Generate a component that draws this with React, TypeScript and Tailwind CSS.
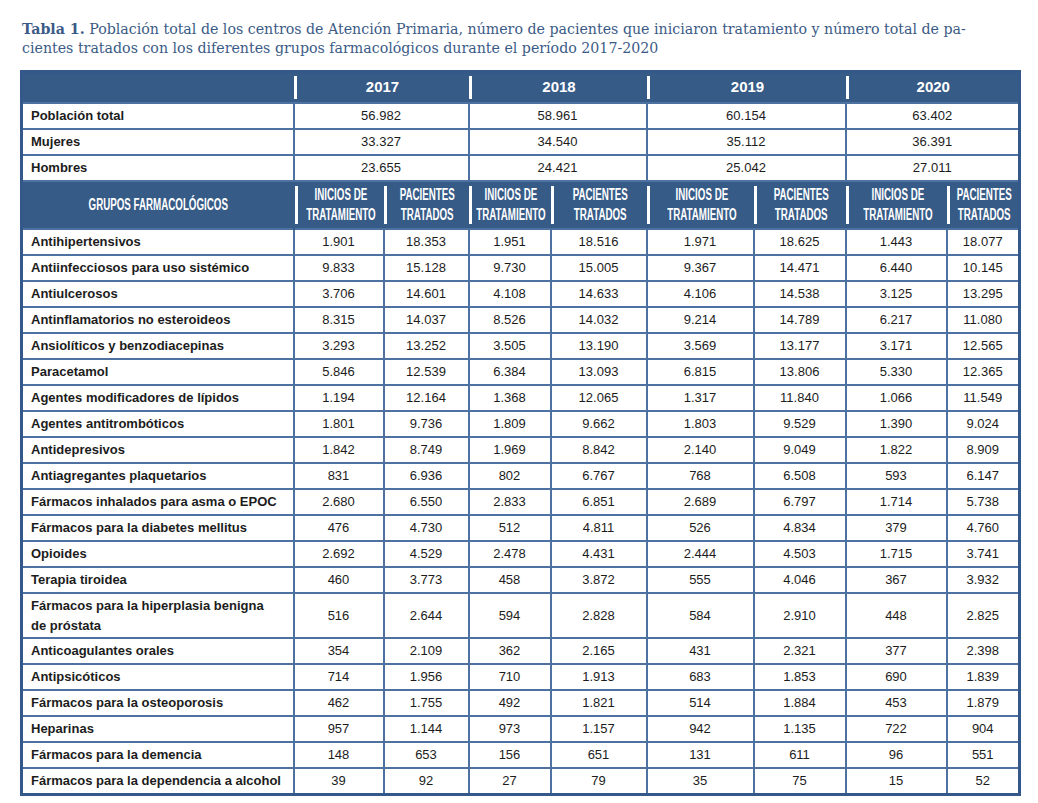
import React from 'react';

const years = ['2017', '2018', '2019', '2020'];

const population = [
  { label: 'Población total', values: ['56.982', '58.961', '60.154', '63.402'] },
  { label: 'Mujeres', values: ['33.327', '34.540', '35.112', '36.391'] },
  { label: 'Hombres', values: ['23.655', '24.421', '25.042', '27.011'] },
];

const groups: { label: React.ReactNode; values: string[]; tall?: boolean }[] = [
  { label: 'Antihipertensivos', values: ['1.901', '18.353', '1.951', '18.516', '1.971', '18.625', '1.443', '18.077'] },
  { label: 'Antiinfecciosos para uso sistémico', values: ['9.833', '15.128', '9.730', '15.005', '9.367', '14.471', '6.440', '10.145'] },
  { label: 'Antiulcerosos', values: ['3.706', '14.601', '4.108', '14.633', '4.106', '14.538', '3.125', '13.295'] },
  { label: 'Antinflamatorios no esteroideos', values: ['8.315', '14.037', '8.526', '14.032', '9.214', '14.789', '6.217', '11.080'] },
  { label: 'Ansiolíticos y benzodiacepinas', values: ['3.293', '13.252', '3.505', '13.190', '3.569', '13.177', '3.171', '12.565'] },
  { label: 'Paracetamol', values: ['5.846', '12.539', '6.384', '13.093', '6.815', '13.806', '5.330', '12.365'] },
  { label: 'Agentes modificadores de lípidos', values: ['1.194', '12.164', '1.368', '12.065', '1.317', '11.840', '1.066', '11.549'] },
  { label: 'Agentes antitrombóticos', values: ['1.801', '9.736', '1.809', '9.662', '1.803', '9.529', '1.390', '9.024'] },
  { label: 'Antidepresivos', values: ['1.842', '8.749', '1.969', '8.842', '2.140', '9.049', '1.822', '8.909'] },
  { label: 'Antiagregantes plaquetarios', values: ['831', '6.936', '802', '6.767', '768', '6.508', '593', '6.147'] },
  { label: 'Fármacos inhalados para asma o EPOC', values: ['2.680', '6.550', '2.833', '6.851', '2.689', '6.797', '1.714', '5.738'] },
  { label: 'Fármacos para la diabetes mellitus', values: ['476', '4.730', '512', '4.811', '526', '4.834', '379', '4.760'] },
  { label: 'Opioides', values: ['2.692', '4.529', '2.478', '4.431', '2.444', '4.503', '1.715', '3.741'] },
  { label: 'Terapia tiroidea', values: ['460', '3.773', '458', '3.872', '555', '4.046', '367', '3.932'] },
  {
    label: (
      <>
        Fármacos para la hiperplasia benigna
        <br />
        de próstata
      </>
    ),
    values: ['516', '2.644', '594', '2.828', '584', '2.910', '448', '2.825'],
    tall: true,
  },
  { label: 'Anticoagulantes orales', values: ['354', '2.109', '362', '2.165', '431', '2.321', '377', '2.398'] },
  { label: 'Antipsicóticos', values: ['714', '1.956', '710', '1.913', '683', '1.853', '690', '1.839'] },
  { label: 'Fármacos para la osteoporosis', values: ['462', '1.755', '492', '1.821', '514', '1.884', '453', '1.879'] },
  { label: 'Heparinas', values: ['957', '1.144', '973', '1.157', '942', '1.135', '722', '904'] },
  { label: 'Fármacos para la demencia', values: ['148', '653', '156', '651', '131', '611', '96', '551'] },
  { label: 'Fármacos para la dependencia a alcohol', values: ['39', '92', '27', '79', '35', '75', '15', '52'] },
];

const colWidths = [272, 90, 85, 82, 96, 107, 92, 101, 73];

// condensed bold header label (no condensed face installed, so squeeze Liberation Sans)
const Condensed: React.FC<{ children: React.ReactNode }> = ({ children }) => (
  <span className="inline-block scale-x-[0.61] whitespace-nowrap">{children}</span>
);

const App: React.FC = () => {
  return (
    <div className="w-[1038px] h-[803px] bg-white pl-[20px] pt-[20px] font-['Liberation_Sans',Arial,sans-serif]">
      <p className="pl-[2px] text-[14.2px] leading-[19px] text-[#3b5b86] font-['DejaVu_Serif',serif]">
        <span className="font-bold">Tabla 1.</span> Población total de los centros de Atención Primaria, número de pacientes que iniciaron tratamiento y número total de pa-
        <br />
        cientes tratados con los diferentes grupos farmacológicos durante el período 2017-2020
      </p>

      <table className="mt-[12px] w-[1000px] table-fixed border-collapse border-[3px] border-[#34588a] text-[13px] text-[#1c1c1c]">
        <colgroup>
          {colWidths.map((w, i) => (
            <col key={i} style={{ width: w }} />
          ))}
        </colgroup>
        <thead>
          <tr className="bg-[#375b87] h-[29px]">
            <th className="p-0"></th>
            {years.map((y) => (
              <th key={y} colSpan={2} className="p-0 py-[3px]">
                <div className="h-[23px] border-l-[3px] border-white flex items-center justify-center text-white text-[15px] font-bold">
                  {y}
                </div>
              </th>
            ))}
          </tr>
        </thead>
        <tbody>
          {population.map((r) => (
            <tr key={r.label} className="h-[26px]">
              <td className="border-2 border-[#4d71a0] pl-[8px] font-bold">{r.label}</td>
              {r.values.map((v, i) => (
                <td key={i} colSpan={2} className="border-2 border-[#4d71a0] text-center">
                  {v}
                </td>
              ))}
            </tr>
          ))}
          <tr className="bg-[#375b87] h-[46px] text-white font-bold text-[16px]">
            <td className="p-0 text-center border-x-2 border-[#375b87]">
              <Condensed>GRUPOS FARMACOLÓGICOS</Condensed>
            </td>
            {years.map((y) => (
              <React.Fragment key={y}>
                <td className="p-0 py-[4px]">
                  <div className="h-[38px] border-l-[3px] border-white flex items-center justify-center text-center leading-[20px]">
                    <Condensed>
                      INICIOS DE
                      <br />
                      TRATAMIENTO
                    </Condensed>
                  </div>
                </td>
                <td className="p-0 py-[4px]">
                  <div className="h-[38px] border-l-[3px] border-white flex items-center justify-center text-center leading-[20px]">
                    <Condensed>
                      PACIENTES
                      <br />
                      TRATADOS
                    </Condensed>
                  </div>
                </td>
              </React.Fragment>
            ))}
          </tr>
          {groups.map((r, idx) => (
            <tr key={idx} className={r.tall ? 'h-[45px]' : 'h-[26px]'}>
              <td className="border-2 border-[#4d71a0] pl-[8px] font-bold leading-[20px]">{r.label}</td>
              {r.values.map((v, i) => (
                <td key={i} className="border-2 border-[#4d71a0] text-center">
                  {v}
                </td>
              ))}
            </tr>
          ))}
        </tbody>
      </table>
    </div>
  );
};

export default App;
